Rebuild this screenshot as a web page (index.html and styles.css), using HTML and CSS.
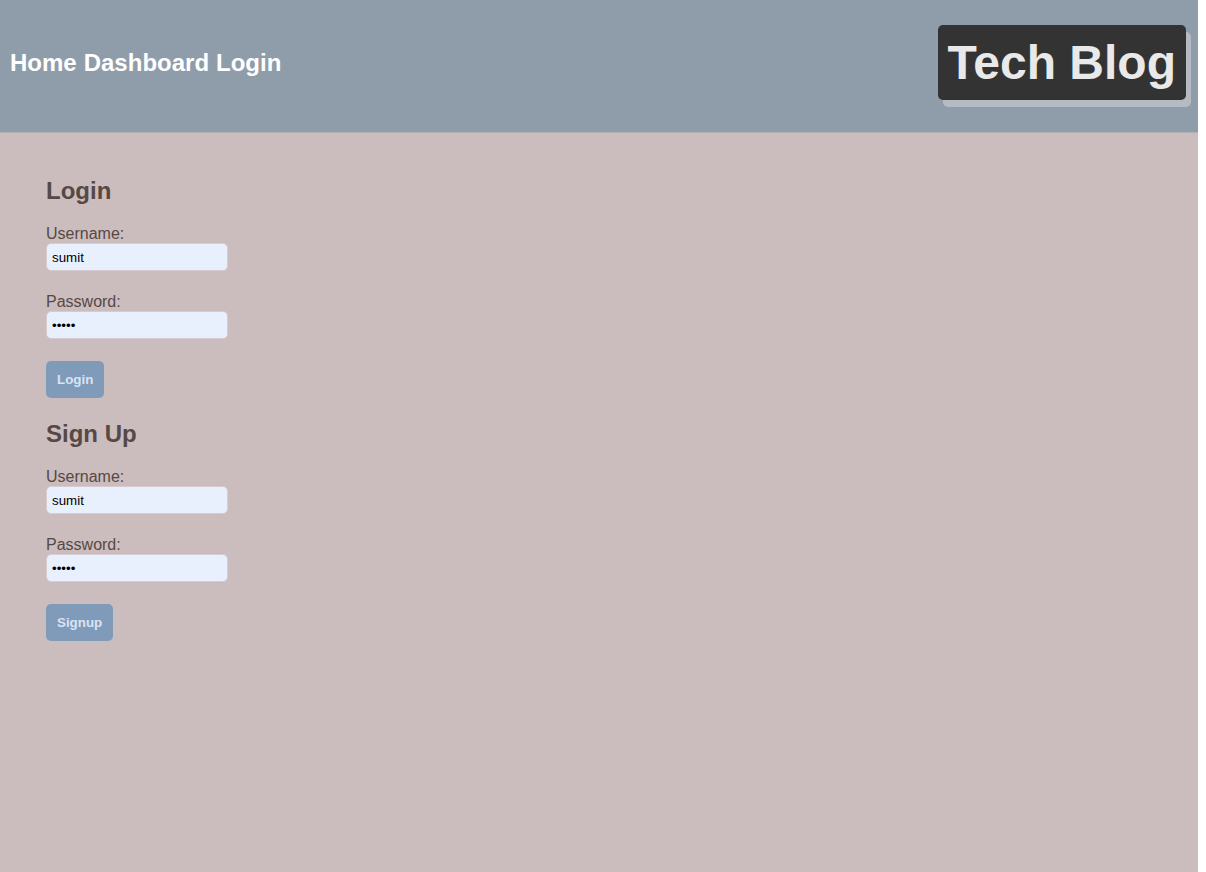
FILE: index.html
```html
<!DOCTYPE html>
<html lang="en">
<head>
<meta charset="utf-8">
<meta name="viewport" content="width=device-width, initial-scale=1">
<title>Tech Blog</title>
<link rel="stylesheet" href="styles.css">
</head>
<body>
<div class="page">
  <header class="header">
    <nav class="nav">
      <a href="#">Home</a>
      <a href="#">Dashboard</a>
      <a href="#">Login</a>
    </nav>
    <h1 class="brand">Tech Blog</h1>
  </header>
  <main class="content">
    <form class="form">
      <h2 class="form-title">Login</h2>
      <div class="field">
        <label for="login-user">Username:</label>
        <input class="input" id="login-user" type="text" value="sumit">
      </div>
      <div class="field">
        <label for="login-pass">Password:</label>
        <input class="input" id="login-pass" type="password" value="sumit">
      </div>
      <button class="button" type="submit">Login</button>
    </form>
    <form class="form">
      <h2 class="form-title">Sign Up</h2>
      <div class="field">
        <label for="signup-user">Username:</label>
        <input class="input" id="signup-user" type="text" value="sumit">
      </div>
      <div class="field">
        <label for="signup-pass">Password:</label>
        <input class="input" id="signup-pass" type="password" value="sumit">
      </div>
      <button class="button" type="submit">Signup</button>
    </form>
  </main>
</div>
</body>
</html>
```
FILE: styles.css
```css
* {
  box-sizing: border-box;
}

body {
  margin: 0 8px 0 0;
  background: #fff;
  color: #574846;
  font-family: "Liberation Sans", Arial, sans-serif;
  font-size: 16px;
  line-height: 18px;
}

.page {
  min-height: 100vh;
  background: #cbbdbd;
}

.header {
  display: flex;
  justify-content: space-between;
  align-items: center;
  padding: 25px 12px 32px 10px;
  border-bottom: 1px solid #b5afb4;
  background: #8f9daa;
}

.nav {
  display: flex;
  gap: 7px;
  font-size: 24px;
  font-weight: bold;
  line-height: 28px;
}

.nav a {
  color: #fff;
  text-decoration: none;
}

.brand {
  margin: 0;
  padding: 10px;
  border-radius: 5px;
  background: #333;
  box-shadow: 5px 7px #b6bbc3;
  color: #e9e9e9;
  font-size: 48px;
  line-height: 55px;
}

.content {
  display: grid;
  gap: 22px;
  padding: 44px 46px;
}

.form {
  display: flex;
  flex-direction: column;
  align-items: flex-start;
}

.form-title {
  margin: 0 0 20px;
  font-size: 24px;
  line-height: 28px;
}

.field {
  display: flex;
  flex-direction: column;
  margin-bottom: 22px;
}

.input {
  width: 182px;
  height: 28px;
  padding: 5px;
  border: 1px solid #d5cbd1;
  border-radius: 5px;
  background: #e8f0fe;
  color: #000;
  font-family: inherit;
}

.button {
  padding: 11px;
  border: 0;
  border-radius: 5px;
  background: #809bb9;
  color: #d9e3f5;
  font-family: inherit;
  font-weight: bold;
}
```
